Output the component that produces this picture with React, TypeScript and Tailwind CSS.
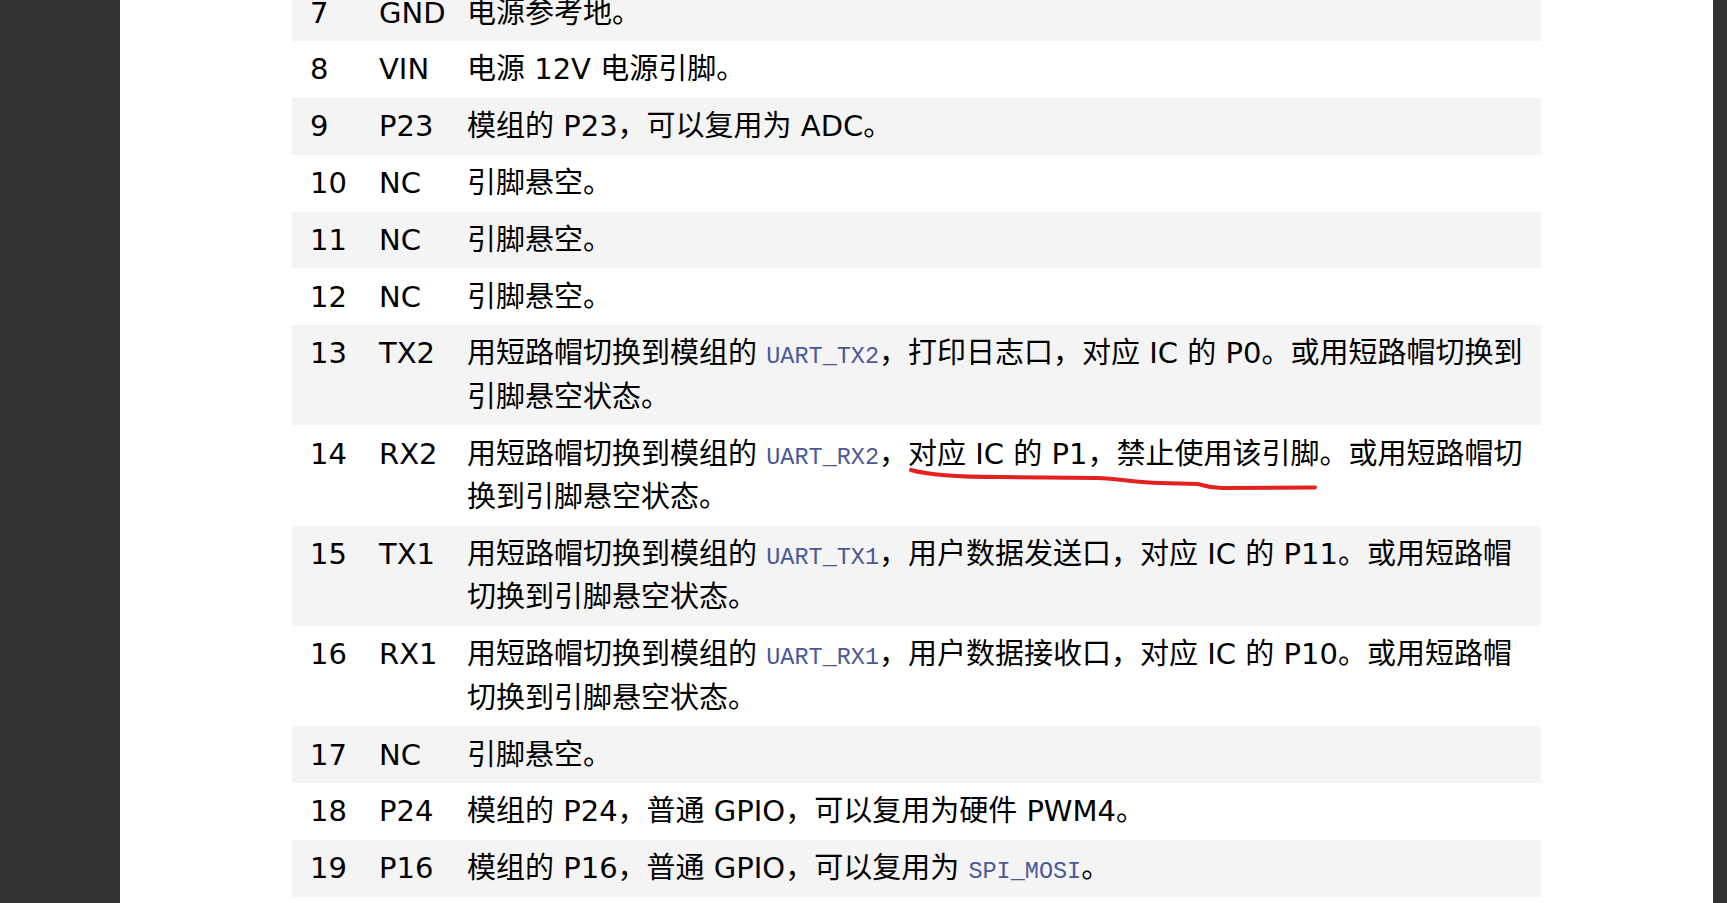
type Part = string | { code: string };

interface PinRow {
    no: number;
    name: string;
    desc: Part[];
}

const rows: PinRow[] = [
    { no: 7, name: 'GND', desc: ['电源参考地。'] },
    { no: 8, name: 'VIN', desc: ['电源 12V 电源引脚。'] },
    { no: 9, name: 'P23', desc: ['模组的 P23，可以复用为 ADC。'] },
    { no: 10, name: 'NC', desc: ['引脚悬空。'] },
    { no: 11, name: 'NC', desc: ['引脚悬空。'] },
    { no: 12, name: 'NC', desc: ['引脚悬空。'] },
    { no: 13, name: 'TX2', desc: ['用短路帽切换到模组的 ', { code: 'UART_TX2' }, '，打印日志口，对应 IC 的 P0。或用短路帽切换到引脚悬空状态。'] },
    { no: 14, name: 'RX2', desc: ['用短路帽切换到模组的 ', { code: 'UART_RX2' }, '，对应 IC 的 P1，禁止使用该引脚。或用短路帽切换到引脚悬空状态。'] },
    { no: 15, name: 'TX1', desc: ['用短路帽切换到模组的 ', { code: 'UART_TX1' }, '，用户数据发送口，对应 IC 的 P11。或用短路帽切换到引脚悬空状态。'] },
    { no: 16, name: 'RX1', desc: ['用短路帽切换到模组的 ', { code: 'UART_RX1' }, '，用户数据接收口，对应 IC 的 P10。或用短路帽切换到引脚悬空状态。'] },
    { no: 17, name: 'NC', desc: ['引脚悬空。'] },
    { no: 18, name: 'P24', desc: ['模组的 P24，普通 GPIO，可以复用为硬件 PWM4。'] },
    { no: 19, name: 'P16', desc: ['模组的 P16，普通 GPIO，可以复用为 ', { code: 'SPI_MOSI' }, '。'] },
];

const Desc = ({ parts }: { parts: Part[] }) => (
    <>
        {parts.map((p, i) =>
            typeof p === 'string' ? (
                <span key={i}>{p}</span>
            ) : (
                <code key={i} className="font-['Liberation_Mono',monospace] text-[23.5px] leading-none text-[#4b5897]">
                    {p.code}
                </code>
            )
        )}
    </>
);

export default function App() {
    return (
        <div className="relative flex h-[903px] w-full overflow-hidden bg-[#333333]">
            <div className="w-[120px] shrink-0 bg-[#333333]" />

            <main className="flex flex-1 justify-center bg-white">
                <div className="-mt-[15.5px] w-[1249px] font-['DejaVu_Sans','Noto_Sans_CJK_SC',sans-serif] text-[29px] leading-[43.5px] text-black">
                    {rows.map(row => (
                        <div
                            key={row.no}
                            className={`flex pt-[7.2px] pb-[6.1px] pl-[18px] ${row.no % 2 === 1 ? 'bg-[#f4f4f4]' : 'bg-white'}`}
                        >
                            <div className="w-[69px] shrink-0">{row.no}</div>
                            <div className="w-[88px] shrink-0">{row.name}</div>
                            <div className="w-[1064px] shrink-0">
                                <Desc parts={row.desc} />
                            </div>
                        </div>
                    ))}
                </div>
            </main>

            <div className="w-[14px] shrink-0 bg-[#333333]" />

            {/* hand-drawn red underline */}
            <svg
                className="pointer-events-none absolute left-0 top-0"
                width="1727"
                height="903"
                viewBox="0 0 1727 903"
            >
                <path
                    d="M911 470 C 928 475, 960 477, 1000 477 L 1097 478 C 1120 479, 1135 482, 1160 483 L 1198 484 C 1205 486, 1210 488, 1222 488 L 1315 487.5"
                    fill="none"
                    stroke="#e3211f"
                    strokeWidth="4"
                    strokeLinecap="round"
                    strokeLinejoin="round"
                />
            </svg>
        </div>
    );
}
